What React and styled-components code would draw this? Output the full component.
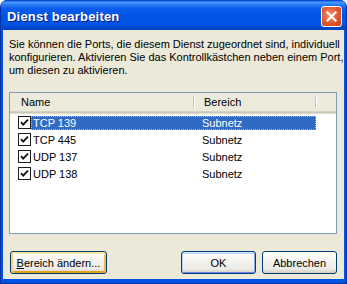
import React from 'react';
import styled, { createGlobalStyle } from 'styled-components';

const GlobalStyle = createGlobalStyle`
    html, body {
        margin: 0;
        padding: 0;
        background: #ffffff;
    }
    body {
        font-family: "Liberation Sans", Arial, sans-serif;
        font-size: 11px;
    }
`;

const ports = [
    { name: 'TCP 139', range: 'Subnetz', selected: true },
    { name: 'TCP 445', range: 'Subnetz' },
    { name: 'UDP 137', range: 'Subnetz' },
    { name: 'UDP 138', range: 'Subnetz' },
];

const Check = () => (
    <svg width="13" height="13" viewBox="0 0 13 13">
        <rect x="0.5" y="0.5" width="12" height="12" fill="#ffffff" stroke="#1c1c1c" />
        <path d="M3 6.2 L5.2 8.6 L10 3.6" fill="none" stroke="#111" strokeWidth="1.8" />
    </svg>
);

const CloseIcon = () => (
    <svg width="11" height="11" viewBox="0 0 11 11">
        <path d="M1.5 1.5 L9.5 9.5 M9.5 1.5 L1.5 9.5" stroke="#ffffff" strokeWidth="2.2" strokeLinecap="square" />
    </svg>
);

export default function App() {
    return (
        <Window>
            <GlobalStyle />
            <TitleBar>
                <Title>Dienst bearbeiten</Title>
                <CloseButton>
                    <CloseIcon />
                </CloseButton>
            </TitleBar>

            <Body>
                <Description>
                    Sie können die Ports, die diesem Dienst zugeordnet sind, individuell<br />
                    konfigurieren. Aktivieren Sie das Kontrollkästchen neben einem Port,<br />
                    um diesen zu aktivieren.
                </Description>

                <ListView>
                    <Header>
                        <HeaderCell $width={184} $pad={11}>Name</HeaderCell>
                        <HeaderCell $width={122} $pad={10}>Bereich</HeaderCell>
                        <HeaderFill />
                    </Header>
                    <Rows>
                        {ports.map((p) => (
                            <Row key={p.name}>
                                <CheckCell>
                                    <Check />
                                </CheckCell>
                                <RowBody $selected={p.selected}>
                                    <NameText>{p.name}</NameText>
                                    <RangeText>{p.range}</RangeText>
                                </RowBody>
                            </Row>
                        ))}
                    </Rows>
                </ListView>

                <ButtonRow>
                    <Button $variant="hot" $width={97}>
                        <u>B</u>ereich ändern...
                    </Button>
                    <Spacer />
                    <Button $variant="default" $width={75}>OK</Button>
                    <Button $width={75}>Abbrechen</Button>
                </ButtonRow>
            </Body>
        </Window>
    );
}

const Window = styled.div`
    width: 347px;
    height: 284px;
    box-sizing: border-box;
    display: flex;
    flex-direction: column;
    background: #0054e3;
    border: 1px solid #0831a8;
    border-top: none;
    border-radius: 7px 7px 0 0;
    overflow: hidden;
`;

const TitleBar = styled.div`
    height: 29px;
    flex-shrink: 0;
    display: flex;
    align-items: center;
    padding: 0 4px 0 6px;
    background: linear-gradient(
        to bottom,
        #1d6df0 0%,
        #4a98ff 6%,
        #2c7ef7 12%,
        #0a5ced 26%,
        #0055e8 50%,
        #0054e3 80%,
        #0049d0 92%,
        #003fb8 100%
    );
    border-top: 1px solid #0a4ccd;
`;

const Title = styled.div`
    flex: 1;
    color: #ffffff;
    font-family: "Liberation Sans", Arial, sans-serif;
    font-weight: bold;
    font-size: 13px;
    letter-spacing: 0.2px;
    text-shadow: 1px 1px 0 #0a1883;
    padding-top: 1px;
`;

const CloseButton = styled.div`
    width: 19px;
    height: 19px;
    display: flex;
    align-items: center;
    justify-content: center;
    border: 1px solid #ffffff;
    border-radius: 3px;
    background: radial-gradient(circle at 40% 40%, #f08a62 0%, #e0582f 55%, #c8401a 100%);
    margin-top: 1px;
`;

const Body = styled.div`
    flex: 1;
    margin: 0 2px 4px 2px;
    background: #ece9d8;
    padding: 8px 7px 5px 6px;
    display: flex;
    flex-direction: column;
    color: #000000;
`;

const Description = styled.div`
    line-height: 13px;
    font-size: 11px;
    white-space: nowrap;
`;

const ListView = styled.div`
    margin-top: 15px;
    height: 142px;
    box-sizing: border-box;
    border: 1px solid #7f9db9;
    background: #ffffff;
    display: flex;
    flex-direction: column;
`;

const Header = styled.div`
    height: 18px;
    display: flex;
    background: #ebeadb;
    border-bottom: 1px solid #d6d2c2;
    box-shadow: 0 1px 0 #cbc7b8, 0 2px 0 #e2dfd3;
`;

const HeaderCell = styled.div`
    position: relative;
    width: ${(p) => p.$width}px;
    box-sizing: border-box;
    padding-left: ${(p) => p.$pad}px;
    display: flex;
    align-items: center;
    &::after {
        content: '';
        position: absolute;
        right: 0;
        top: 3px;
        bottom: 3px;
        width: 1px;
        background: #c7c5b2;
        box-shadow: 1px 0 0 #ffffff;
    }
`;

const HeaderFill = styled.div`
    flex: 1;
`;

const Rows = styled.div`
    padding-top: 2px;
    display: flex;
    flex-direction: column;
`;

const Row = styled.div`
    height: 17px;
    display: flex;
    align-items: center;
`;

const CheckCell = styled.div`
    width: 21px;
    padding-left: 8px;
    box-sizing: border-box;
    display: flex;
    align-items: center;
`;

const RowBody = styled.div`
    width: 285px;
    height: 14px;
    box-sizing: border-box;
    display: flex;
    align-items: center;
    background: ${(p) => (p.$selected ? '#316ac5' : 'transparent')};
    color: ${(p) => (p.$selected ? '#ffffff' : '#000000')};
    border: 1px dotted ${(p) => (p.$selected ? '#9fb6dc' : 'transparent')};
`;

const NameText = styled.div`
    width: 162px;
    padding-left: 1px;
`;

const RangeText = styled.div`
    padding-left: 7px;
`;

const ButtonRow = styled.div`
    margin-top: auto;
    display: flex;
    gap: 6px;
    padding-left: 1px;
`;

const Spacer = styled.div`
    flex: 1;
`;

const Button = styled.div`
    width: ${(p) => p.$width}px;
    height: 23px;
    box-sizing: border-box;
    border: 1px solid #003c74;
    border-radius: 3px;
    background: linear-gradient(to bottom, #ffffff 0%, #f4f3ee 40%, #ecebe6 80%, #d6d0c5 100%);
    display: flex;
    align-items: center;
    justify-content: center;
    font-size: 11px;
    color: #000000;
    box-shadow: ${(p) =>
        p.$variant === 'hot'
            ? 'inset 0 2px 0 #ffe7a2, inset 2px 0 0 #fbd27a, inset -2px 0 0 #f5b84a, inset 0 -2px 0 #e5a01a'
            : p.$variant === 'default'
            ? 'inset 0 1px 0 #cee7ff, inset 1px 0 0 #bcd4f6, inset -1px 0 0 #89ade4, inset 0 -1px 0 #6982ee, inset 0 2px 0 #bcd4f6'
            : 'none'};
`;
